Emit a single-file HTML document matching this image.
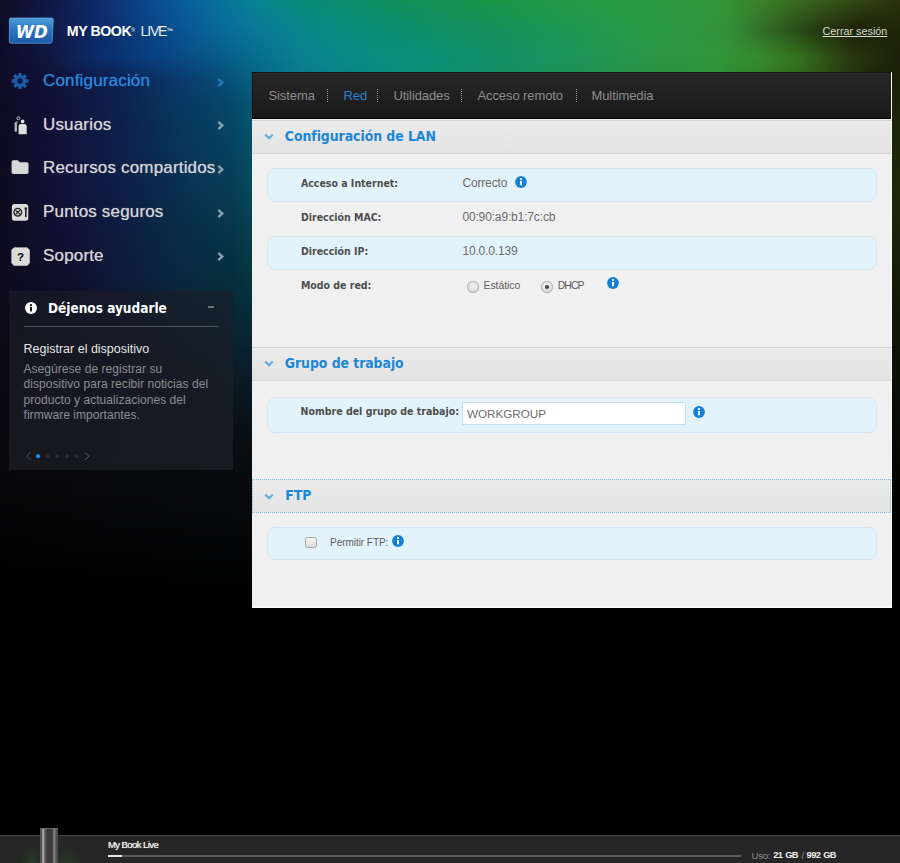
<!DOCTYPE html>
<html lang="es">
<head>
<meta charset="utf-8">
<title>My Book Live</title>
<style>
*{box-sizing:border-box;margin:0;padding:0}
html,body{width:900px;height:863px;overflow:hidden;background:#000}
body{position:relative;font-family:"Liberation Sans",Arial,sans-serif;color:#ddd}
#bg{position:absolute;left:0;top:0;width:900px;height:863px;overflow:hidden;background:#000}
.abs{position:absolute}
#logo{left:8.4px;top:17.4px;width:46.4px;height:27.2px}
#brand{left:66.8px;top:23.4px;font-size:14.2px;line-height:16px;font-weight:bold;color:#fff;letter-spacing:-.45px;white-space:nowrap}
#brand .lt{font-weight:normal;letter-spacing:-1.25px;margin-left:2.2px;color:#e8eef4}
#brand sup.tm{font-size:6.5px;letter-spacing:-.3px;top:0}
#brand sup{font-size:5px;font-weight:normal;vertical-align:top;position:relative;top:-1px;letter-spacing:0}
#logout{left:822.5px;top:24.5px;font-size:10.8px;line-height:13px;color:#d4dccc;text-decoration:underline;white-space:nowrap}
.nav{left:43px;margin-top:.8px;text-shadow:0 0 .8px rgba(214,214,214,.75);letter-spacing:.17px;font-size:17px;color:#d4d4d4;white-space:nowrap;line-height:22px}
.nav.on{color:#2b8ada;text-shadow:0 0 .8px rgba(43,138,218,.75)}
.chev{left:216.5px;width:8px;height:9px;margin-top:.6px}
.ico{left:10px;width:20px;height:20px}
#help{left:9px;top:290.5px;width:223.5px;height:179.5px;background:linear-gradient(rgba(26,28,38,.6),rgba(32,35,40,.62))}
#help h3{position:absolute;left:39px;top:9px;font-family:"DejaVu Sans Condensed","DejaVu Sans",sans-serif;font-weight:bold;font-size:13.5px;line-height:17px;color:#fff;letter-spacing:0;white-space:nowrap}
#help .hr{position:absolute;left:14.5px;top:35px;width:194.5px;height:1px;background:#4c525c}
#help .t{position:absolute;left:14.5px;top:51px;font-size:12.5px;line-height:15px;color:#e6e6e6;white-space:nowrap}
#help .d{position:absolute;left:14.5px;top:71.2px;font-size:12px;line-height:15.6px;color:#8c8e92;white-space:nowrap;letter-spacing:.05px}
#panel{left:252px;top:72.3px;width:640.2px;height:535.3px;background:#f0f0f0;border-right:1.5px solid #f9f9f9;border-bottom:2px solid #fafafa}
#tabs{position:absolute;left:0;top:0;width:100%;height:47px;background:linear-gradient(#272727,#191919);border-top:1.5px solid #121212;border-bottom:1px solid #050505;border-left:1px solid #0a0a0a;font-size:13px;line-height:15px;color:#8e8e8e}
#tabs span{position:absolute;top:14.4px;white-space:nowrap;letter-spacing:-.1px}
#tabs i{position:absolute;top:16px;width:0;height:13px;border-left:1px dotted #909090;margin-left:-1.3px}
.sec{position:absolute;left:0;width:100%;height:34px;background:linear-gradient(#ebebeb,#e3e3e3);border-top:1px solid #d2d2d2;border-bottom:1px solid #d6d6d6}
.sec b{position:absolute;left:31.8px;top:7.1px;font-family:"DejaVu Sans Condensed","DejaVu Sans",sans-serif;letter-spacing:-.06px;font-size:13.9px;line-height:17px;color:#1c86d6;white-space:nowrap}
.sec b,.sec svg{margin-left:1px}
.sec svg{position:absolute;left:10.8px;top:12px;width:10px;height:7.5px}
.row{position:absolute;left:14.9px;width:610.3px;height:34px;border-radius:9px}
.row.hl{background:#e3f3fb;border:1px solid #d3e8f2}
.lbl{position:absolute;left:34px;top:8.8px;font-family:"DejaVu Sans Condensed","DejaVu Sans",sans-serif;font-weight:bold;font-size:10.5px;line-height:13px;color:#4e4e4e;white-space:nowrap}
.hl .lbl{left:33px;top:7.8px}
.val{position:absolute;left:195.5px;top:8.2px;font-size:12px;line-height:14px;color:#6c6c6c;white-space:nowrap;letter-spacing:-.15px}
.hl .val{left:194.5px;top:7.2px}
.info{position:absolute;width:12px;height:12px}
.radio{position:absolute;width:11.5px;height:11.5px;border-radius:50%;border:1px solid #a9a9a9;background:radial-gradient(circle at 50% 35%,#f4f4f4,#d4d4d4)}
.rl{position:absolute;margin:1px 0 0 -.6px;font-size:10.4px;line-height:12px;color:#5c5c5c;white-space:nowrap}
.u{position:absolute;top:14.7px;font-size:9.6px;line-height:11px;color:#868686;white-space:nowrap}
.ub{font-weight:bold;font-size:9.3px;letter-spacing:-.62px;word-spacing:1px;color:#f0f0f0}
#foot{left:0;top:834.5px;width:900px;height:29px;background:#262626;border-top:1px solid #404040;overflow:hidden}
</style>
</head>
<body>
<div id="bg"><div style="position:absolute;left:0;top:0px;width:900px;height:30px;background:linear-gradient(to right,#100e26 0px,#10143a 30px,#121c4c 60px,#0e2c6a 100px,#0c4488 140px,#0a5c9a 180px,#08729c 220px,#088490 260px,#0a8a7a 300px,#10905a 400px,#1c9648 500px,#269a44 600px,#2e9840 680px,#349438 720px,#3a822c 760px,#3a6820 800px,#324c16 850px,#2a300e 900px);"></div><div style="position:absolute;left:0;top:0px;width:900px;height:58px;background:linear-gradient(to right,#0e0c28 0px,#10143c 30px,#101c4e 60px,#0c2c68 100px,#0c3878 125px,#0a5090 175px,#0a6a9a 225px,#0a7e94 275px,#0a8a84 325px,#0c8c6c 400px,#149060 475px,#1e9650 575px,#2c9a44 665px,#348e38 730px,#2e5e20 780px,#263610 820px,#1e2008 860px,#20280a 900px);-webkit-mask-image:linear-gradient(to bottom,transparent 0,#000 30px);mask-image:linear-gradient(to bottom,transparent 0,#000 30px);"></div><div style="position:absolute;left:0;top:30px;width:900px;height:50px;background:linear-gradient(to right,#0e0c28 0px,#101840 50px,#0c2c6a 100px,#0a3e80 150px,#085286 200px,#066a8c 250px,#0a8090 300px,#0a8a86 350px,#0a907c 400px,#0c8e70 450px,#1a9460 550px,#2a9446 650px,#32943a 720px,#368a2e 760px,#34701e 800px,#283a10 850px,#1c2008 900px);-webkit-mask-image:linear-gradient(to bottom,transparent 0,#000 28px);mask-image:linear-gradient(to bottom,transparent 0,#000 28px);"></div><div style="position:absolute;left:0;top:58px;width:900px;height:45px;background:linear-gradient(to right,#0e0c26 0px,#10143c 60px,#0c2254 120px,#0a3a6c 180px,#085078 230px,#08607e 250px,#0a788c 300px,#0a8c7a 400px,#1c9054 550px,#309038 720px,#32681c 800px,#26360e 850px,#1a2008 880px,#1c2208 900px);-webkit-mask-image:linear-gradient(to bottom,transparent 0,#000 22px);mask-image:linear-gradient(to bottom,transparent 0,#000 22px);"></div><div style="position:absolute;left:0;top:80px;width:900px;height:110px;background:linear-gradient(to right,#0e0c24 0px,#10123a 60px,#0e224c 120px,#083860 180px,#06486a 230px,#065670 250px,#0a7088 300px,#0a8678 400px,#1c9054 550px,#308e38 720px,#30601a 800px,#24340e 850px,#1a2008 880px,#1c2408 900px);-webkit-mask-image:linear-gradient(to bottom,transparent 0,#000 23px);mask-image:linear-gradient(to bottom,transparent 0,#000 23px);"></div><div style="position:absolute;left:0;top:103px;width:900px;height:177px;background:linear-gradient(to right,#0e0c20 0px,#12123a 60px,#0e1e46 120px,#0a3050 180px,#083c54 230px,#06485a 250px,#06485a 260px,#1c2a0a 880px,#1c2a0a 900px);-webkit-mask-image:linear-gradient(to bottom,transparent 0,#000 87px);mask-image:linear-gradient(to bottom,transparent 0,#000 87px);"></div><div style="position:absolute;left:0;top:190px;width:900px;height:160px;background:linear-gradient(to right,#0e0c1e 0px,#100e2a 60px,#0e1a38 120px,#0a283e 180px,#062e3c 230px,#063440 250px,#063440 260px,#141c08 880px,#141c08 900px);-webkit-mask-image:linear-gradient(to bottom,transparent 0,#000 90px);mask-image:linear-gradient(to bottom,transparent 0,#000 90px);"></div><div style="position:absolute;left:0;top:280px;width:900px;height:140px;background:linear-gradient(to right,#0c0a16 0px,#0e0c1e 60px,#0c1222 120px,#0a1a28 180px,#0a2230 240px,#0a2230 260px,#0e1406 880px,#0e1406 900px);-webkit-mask-image:linear-gradient(to bottom,transparent 0,#000 70px);mask-image:linear-gradient(to bottom,transparent 0,#000 70px);"></div><div style="position:absolute;left:0;top:350px;width:900px;height:130px;background:linear-gradient(to right,#0a080e 0px,#0a0c14 120px,#0a1218 240px,#0a1218 260px,#0a0c06 880px,#0a0c06 900px);-webkit-mask-image:linear-gradient(to bottom,transparent 0,#000 70px);mask-image:linear-gradient(to bottom,transparent 0,#000 70px);"></div><div style="position:absolute;left:0;top:420px;width:900px;height:200px;background:linear-gradient(to right,#070709 0px,#080a0c 240px,#040402 880px,#040402 900px);-webkit-mask-image:linear-gradient(to bottom,transparent 0,#000 60px);mask-image:linear-gradient(to bottom,transparent 0,#000 60px);"></div><div style="position:absolute;left:0;top:480px;width:900px;height:383px;background:linear-gradient(to right,#000 0px,#000 900px);-webkit-mask-image:linear-gradient(to bottom,transparent 0,#000 140px);mask-image:linear-gradient(to bottom,transparent 0,#000 140px);"></div></div>

<svg id="logo" class="abs" viewBox="0 0 47 28">
 <defs><linearGradient id="lg" x1="0" y1="0" x2="0" y2="1"><stop offset="0" stop-color="#4c9ddc"/><stop offset=".5" stop-color="#2a74c0"/><stop offset="1" stop-color="#1c58a6"/></linearGradient></defs>
 <path d="M2.5 1 H44.5 Q46.5 1 46.3 3 L45 25 Q44.8 27 43 27 H2.5 Q1 27 1 25 V3 Q1 1 2.5 1Z" fill="url(#lg)" stroke="#6fb0e6" stroke-width=".7"/>
 <text x="7.5" y="21.4" font-family="DejaVu Sans, sans-serif" font-weight="bold" font-style="oblique" font-size="19" fill="#fff" textLength="33" lengthAdjust="spacingAndGlyphs">WD</text>
</svg>
<div id="brand" class="abs">MY BOOK<sup>®</sup> <span class="lt">LIVE</span><sup class="tm">™</sup></div>
<div id="logout" class="abs">Cerrar sesión</div>

<!-- nav icons -->
<svg class="abs" style="left:11px;top:72.1px;width:18px;height:18px" viewBox="-9 -9 18 18">
 <g fill="#1a5eaa">
  <circle r="5.9"/>
  <g id="teeth"><rect x="-1.7" y="-8.1" width="3.4" height="16.2" rx=".5"/><rect x="-8.4" y="-1.7" width="16.8" height="3.4" rx=".5"/></g>
  <use href="#teeth" transform="rotate(45)"/>
 </g>
 <circle r="2.7" fill="#0e1540"/>
</svg>
<svg class="abs" style="left:13px;top:115px;width:16px;height:20px" viewBox="13 115 16 20">
 <circle cx="18.4" cy="118.3" r="1.5" fill="none" stroke="#cfcfcf" stroke-width=".9"/>
 <path d="M15.8 130.6 V123.4" fill="none" stroke="#9a9aa6" stroke-width="2.6" stroke-linecap="round"/>
 <path d="M15.8 131 V123.2 Q15.8 122 17 122 H18.5" fill="none" stroke="#e0e0e0" stroke-width="1" stroke-dasharray="1.4 .8"/>
 <circle cx="22.6" cy="121.4" r="1.9" fill="#dedede"/>
 <path d="M18.6 134.2 V126.2 Q18.6 124 20.8 124 H24.5 Q26.7 124 26.7 126.2 V134.2Z" fill="#dedede"/>
</svg>
<svg class="abs" style="left:11px;top:159px;width:18px;height:16px" viewBox="11 159 18 16">
 <path d="M11.6 162 Q11.6 160.2 13.4 160.2 H17.2 Q18.2 160.2 18.8 161.2 L19.4 162.2 H26.8 Q28.5 162.2 28.5 164 V172.2 Q28.5 174 26.8 174 H13.4 Q11.6 174 11.6 172.2Z" fill="#d8d8d6"/>
</svg>
<svg class="abs" style="left:11px;top:203px;width:18px;height:19px" viewBox="11 203 18 19">
 <rect x="11.9" y="203.9" width="16.4" height="16.8" rx="2.6" fill="#dcdcdc"/>
 <circle cx="17.8" cy="212.2" r="3.8" fill="none" stroke="#222" stroke-width="1.4"/>
 <path d="M15.4 209.8 L20.2 214.6 M20.2 209.8 L15.4 214.6" stroke="#222" stroke-width="1.2"/>
 <circle cx="17.8" cy="212.2" r="1.1" fill="#222"/>
 <path d="M25.8 209 V216.4" stroke="#222" stroke-width="1.6" stroke-linecap="round"/>
 <circle cx="25.8" cy="208.6" r="1.3" fill="#222"/>
</svg>
<svg class="abs" style="left:11px;top:247px;width:19px;height:19px" viewBox="11 247 19 19">
 <path d="M14 247.7 H27.2 L29.5 250 V263.1 L27.2 265.4 H14 L11.7 263.1 V250Z" fill="#dcdcdc" stroke="#dcdcdc" stroke-width=".6" stroke-linejoin="round"/>
 <text x="20.4" y="260.8" text-anchor="middle" font-family="Liberation Sans, sans-serif" font-weight="bold" font-size="11.5" fill="#000">?</text>
</svg>

<div class="abs nav on" style="top:69.5px">Configuración</div>
<div class="abs nav" style="top:113px">Usuarios</div>
<div class="abs nav" style="top:156.7px">Recursos compartidos</div>
<div class="abs nav" style="top:200.5px">Puntos seguros</div>
<div class="abs nav" style="top:244.3px">Soporte</div>

<svg class="abs chev" style="top:77px" viewBox="0 0 8 9"><path d="M1.3 .9 L5.3 4.5 L1.3 8.1" fill="none" stroke="#2478c2" stroke-width="2.4"/></svg>
<svg class="abs chev" style="top:120.7px" viewBox="0 0 8 9"><path d="M1.3 .9 L5.3 4.5 L1.3 8.1" fill="none" stroke="#8a9eac" stroke-width="2.4"/></svg>
<svg class="abs chev" style="top:164.3px" viewBox="0 0 8 9"><path d="M1.3 .9 L5.3 4.5 L1.3 8.1" fill="none" stroke="#8a9eac" stroke-width="2.4"/></svg>
<svg class="abs chev" style="top:208px" viewBox="0 0 8 9"><path d="M1.3 .9 L5.3 4.5 L1.3 8.1" fill="none" stroke="#8a9eac" stroke-width="2.4"/></svg>
<svg class="abs chev" style="top:251.8px" viewBox="0 0 8 9"><path d="M1.3 .9 L5.3 4.5 L1.3 8.1" fill="none" stroke="#8a9eac" stroke-width="2.4"/></svg>

<div id="help" class="abs">
 <svg style="position:absolute;left:15.8px;top:11.4px;width:12px;height:12px" viewBox="0 0 12 12"><circle cx="6" cy="6" r="6" fill="#fff"/><rect x="5" y="5" width="2" height="4.4" fill="#111"/><circle cx="6" cy="3.2" r="1.15" fill="#111"/></svg>
 <h3>Déjenos ayudarle</h3>
 <div style="position:absolute;left:198.8px;top:15.2px;width:6.5px;height:2px;background:#6c7078"></div>
 <div class="hr"></div>
 <div class="t">Registrar el dispositivo</div>
 <div class="d">Asegúrese de registrar su<br>dispositivo para recibir noticias del<br>producto y actualizaciones del<br>firmware importantes.</div>
 <svg style="position:absolute;left:16px;top:160px;width:70px;height:11px" viewBox="25 451 70 11">
  <path d="M30.4 452.4 L26.6 456.2 L30.4 460" fill="none" stroke="#555a62" stroke-width="1"/>
  <circle cx="38" cy="456.2" r="2.1" fill="#1f8ae0"/>
  <circle cx="47.8" cy="456.2" r="1.6" fill="#2a2e38"/><circle cx="57.4" cy="456.2" r="1.6" fill="#2a2e38"/><circle cx="67" cy="456.2" r="1.6" fill="#2a2e38"/><circle cx="76.6" cy="456.2" r="1.6" fill="#2a2e38"/>
  <path d="M85 452.4 L88.8 456.2 L85 460" fill="none" stroke="#555a62" stroke-width="1"/>
 </svg>
</div>

<svg width="0" height="0" style="position:absolute"><defs>
 <g id="inf"><circle cx="6" cy="6" r="5.9" fill="#1580d8"/><rect x="5" y="5" width="2" height="4.3" fill="#fff"/><circle cx="6" cy="3.1" r="1.15" fill="#fff"/></g>
</defs></svg>
<div id="panel" class="abs">
 <div id="tabs">
  <span style="left:15.5px">Sistema</span><i style="left:75px"></i>
  <span style="left:90.5px;color:#2584d4">Red</span><i style="left:125.5px"></i>
  <span style="left:140.5px">Utilidades</span><i style="left:209.5px"></i>
  <span style="left:224.5px">Acceso remoto</span><i style="left:324px"></i>
  <span style="left:338.5px">Multimedia</span>
 </div>

 <div class="sec" style="top:47.5px"><svg viewBox="0 0 10 7"><path d="M1.2 1.2 L5 5 L8.8 1.2" fill="none" stroke="#62aede" stroke-width="2.2"/></svg><b>Configuración de LAN</b></div>
 <div class="row hl" style="top:96px"><span class="lbl">Acceso a Internet:</span><span class="val">Correcto</span><svg class="info" style="left:247.6px;top:6.8px" viewBox="0 0 12 12"><use href="#inf"/></svg></div>
 <div class="row" style="top:130px"><span class="lbl">Dirección MAC:</span><span class="val">00:90:a9:b1:7c:cb</span></div>
 <div class="row hl" style="top:164px"><span class="lbl">Dirección IP:</span><span class="val">10.0.0.139</span></div>
 <div class="row" style="top:198px"><span class="lbl">Modo de red:</span>
  <i class="radio" style="left:200.3px;top:11.2px"></i><span class="rl" style="left:217.3px;top:9.2px;letter-spacing:-.05px">Estático</span>
  <i class="radio" style="left:274.3px;top:11.2px"></i><i style="position:absolute;left:277.8px;top:14.7px;width:4.5px;height:4.5px;border-radius:50%;background:#3c3c3c"></i><span class="rl" style="left:291.5px;top:9.2px;letter-spacing:-.95px">DHCP</span>
  <svg class="info" style="left:340.5px;top:7.2px" viewBox="0 0 12 12"><use href="#inf"/></svg></div>

 <div class="sec" style="top:275px"><svg viewBox="0 0 10 7"><path d="M1.2 1.2 L5 5 L8.8 1.2" fill="none" stroke="#62aede" stroke-width="2.2"/></svg><b>Grupo de trabajo</b></div>
 <div class="row hl" style="top:324.5px;height:36px"><span class="lbl" style="top:7.6px;left:32.7px">Nombre del grupo de trabajo:</span>
  <div style="position:absolute;left:194.2px;top:4.6px;width:224px;height:22.5px;background:#fff;border:1px solid #c4dff0;font-size:11.7px;line-height:14px;color:#6e6e6e;padding:3.2px 0 0 3.8px;white-space:nowrap">WORKGROUP</div>
  <svg class="info" style="left:425px;top:8px" viewBox="0 0 12 12"><use href="#inf"/></svg></div>

 <div class="sec" style="top:407px;border:1px dotted #7fbbe2"><svg viewBox="0 0 10 7" style="left:10px;top:13px"><path d="M1.2 1.2 L5 5 L8.8 1.2" fill="none" stroke="#62aede" stroke-width="2.2"/></svg><b style="left:31.3px">FTP</b></div>
 <div class="row hl" style="top:455px;height:32.5px">
  <i style="position:absolute;left:37.3px;top:8.5px;width:11.5px;height:11.5px;border:1px solid #a6a6a6;border-radius:2.5px;background:linear-gradient(#f6f6f6,#dcdcdc)"></i>
  <span class="rl" style="left:62.8px;top:7.8px;font-size:10px;letter-spacing:-.05px">Permitir FTP:</span>
  <svg class="info" style="left:123.8px;top:6.3px" viewBox="0 0 12 12"><use href="#inf"/></svg></div>
</div>

<div id="foot" class="abs">
 <div style="position:absolute;left:20px;top:8px;width:24px;height:26px;background:radial-gradient(ellipse at 50% 100%,rgba(40,120,30,.35),rgba(40,120,30,0) 70%)"></div>
 <div style="position:absolute;left:56px;top:8px;width:26px;height:26px;background:radial-gradient(ellipse at 40% 100%,rgba(40,120,30,.3),rgba(40,120,30,0) 70%)"></div>
 <div style="position:absolute;left:108px;top:3.9px;font-size:9.6px;line-height:11px;color:#f4f4f4;letter-spacing:-.62px;white-space:nowrap;text-shadow:0 0 .7px rgba(255,255,255,.8)">My Book Live</div>
 <div style="position:absolute;left:108px;top:19.8px;width:633px;height:1.7px;background:#5c5c5c"></div>
 <div style="position:absolute;left:108px;top:19.6px;width:13.5px;height:2px;background:#e4e4e4"></div>
 <div class="u" style="left:751.6px;letter-spacing:-.33px">Uso:</div>
 <div class="u ub" style="left:773.2px">21 GB</div>
 <div class="u" style="left:801.6px">/</div>
 <div class="u ub" style="left:806.6px">992 GB</div>
</div>
<div class="abs" style="left:40px;top:828px;width:17.8px;height:35px;background:linear-gradient(to right,#4e4e4e 0,#5a5a5a 10%,#c4c4c4 17%,#6a6a6a 25%,#3c3c3c 40%,#3a3a3a 68%,#8e8e8e 79%,#565656 88%,#444 100%);border-top:1px solid #6a6a6a"></div>
</body>
</html>
